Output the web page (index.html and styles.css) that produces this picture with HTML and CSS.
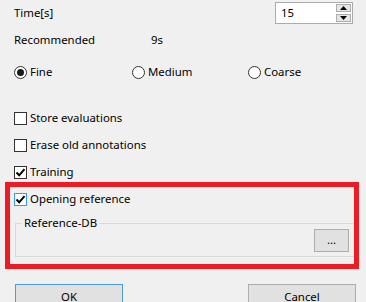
FILE: index.html
```html
<!DOCTYPE html>
<html>
<head>
<meta charset="utf-8">
<link rel="stylesheet" href="styles.css">
</head>
<body>
<div class="dialog">
  <div class="row row-time">
    <span class="label">Time[s]</span>
    <div class="spin">
      <span class="spin-value">15</span>
      <div class="spin-buttons">
        <span class="spin-btn"><svg width="7" height="4" viewBox="0 0 7 4"><path d="M0 4 L3.5 0 L7 4 Z" fill="#000"/></svg></span>
        <span class="spin-btn"><svg width="7" height="4" viewBox="0 0 7 4"><path d="M0 0 L7 0 L3.5 4 Z" fill="#000"/></svg></span>
      </div>
    </div>
  </div>

  <div class="row row-rec">
    <span class="rec-label">Recommended</span>
    <span>9s</span>
  </div>

  <div class="row row-radios">
    <label class="opt"><span class="radio checked"></span>Fine</label>
    <label class="opt"><span class="radio"></span>Medium</label>
    <label class="opt"><span class="radio"></span>Coarse</label>
  </div>

  <div class="row row-check first">
    <span class="check"></span>Store evaluations
  </div>
  <div class="row row-check">
    <span class="check"></span>Erase old annotations
  </div>
  <div class="row row-check">
    <span class="check"><svg width="11" height="11" viewBox="0 0 11 11"><path d="M1.5 5.5 L4.2 8.3 L9.5 2.2" fill="none" stroke="#000" stroke-width="2"/></svg></span>Training
  </div>

  <div class="highlight">
    <div class="row row-check inner">
      <span class="check focus"><svg width="11" height="11" viewBox="0 0 11 11"><path d="M1.5 5.5 L4.2 8.3 L9.5 2.2" fill="none" stroke="#000" stroke-width="2"/></svg></span>Opening reference
    </div>
    <div class="group">
      <span class="group-label">Reference-DB</span>
      <div class="group-body">
        <span class="btn small">...</span>
      </div>
    </div>
  </div>

  <div class="actions">
    <span class="btn big default">OK</span>
    <span class="btn big">Cancel</span>
  </div>
</div>
</body>
</html>
```

FILE: styles.css
```css
html, body {
  margin: 0;
  padding: 0;
  background: #f0f0f0;
}
body {
  font-family: "Noto Sans", "DejaVu Sans", sans-serif;
  font-size: 11.4px;
  color: #000;
  width: 366px;
  height: 302px;
  overflow: hidden;
}
.dialog {
  display: flex;
  flex-direction: column;
}
.row {
  display: flex;
  align-items: center;
  margin-left: 14px;
  height: 16px;
  line-height: 16px;
  white-space: nowrap;
}
.row-time {
  height: 22px;
  margin-top: 2px;
  margin-right: 13px;
}
.spin {
  margin-left: auto;
  width: 78px;
  height: 22px;
  box-sizing: border-box;
  border: 1px solid #ababab;
  background: #fff;
  display: flex;
  align-items: center;
}
.spin-value {
  padding-left: 5px;
  flex: 1;
}
.spin-buttons {
  display: flex;
  flex-direction: column;
  gap: 2px;
  margin-right: 1px;
}
.spin-btn {
  width: 15px;
  height: 8px;
  box-sizing: border-box;
  border: 1px solid #adadad;
  background: #e5e5e5;
  display: flex;
  align-items: center;
  justify-content: center;
}
.row-rec {
  margin-top: 8px;
}
.rec-label {
  width: 137px;
}
.row-radios {
  margin-top: 16px;
  display: grid;
  grid-template-columns: 118px 116px auto;
}
.opt {
  display: flex;
  align-items: center;
}
.radio {
  width: 13px;
  height: 13px;
  box-sizing: border-box;
  border: 1px solid #333;
  border-radius: 50%;
  background: #fff;
  margin-right: 3px;
  display: flex;
  align-items: center;
  justify-content: center;
}
.radio.checked::after {
  content: "";
  width: 7px;
  height: 7px;
  border-radius: 50%;
  background: #1a1a1a;
}
.row-check {
  margin-top: 11px;
}
.row-check.first {
  margin-top: 30px;
}
.check {
  width: 13px;
  height: 13px;
  box-sizing: border-box;
  border: 1px solid #333;
  background: #fff;
  margin-right: 3px;
  display: flex;
  align-items: center;
  justify-content: center;
}
.check.focus {
  border-color: #3399ff;
}
.highlight {
  margin-top: 2px;
  margin-left: 5px;
  width: 354px;
  box-sizing: border-box;
  border: 5px solid #ed1c24;
  padding: 4px 0 7px 0;
}
.row-check.inner {
  margin-top: 0;
  margin-left: 4px;
}
.group {
  margin-top: 16px;
  margin-left: 5px;
  border: 1px solid #d9d9d9;
  border-right: none;
  padding: 0 5px 4px 0;
  display: flex;
  flex-direction: column;
}
.group-label {
  align-self: flex-start;
  margin-top: -7px;
  margin-left: 6px;
  padding: 0 2px;
  background: #f0f0f0;
  line-height: 12px;
}
.group-body {
  display: flex;
  justify-content: flex-end;
}
.btn {
  box-sizing: border-box;
  border: 1px solid #adadad;
  background: #e1e1e1;
  display: flex;
  align-items: center;
  justify-content: center;
}
.btn.small {
  width: 35px;
  height: 23px;
  padding-bottom: 2px;
}
.actions {
  margin-top: 15px;
  margin-left: 15px;
  margin-right: 10px;
  display: flex;
  justify-content: space-between;
}
.btn.big {
  width: 108px;
  height: 24px;
}
.btn.default {
  border-color: #4a9be6;
}
```
